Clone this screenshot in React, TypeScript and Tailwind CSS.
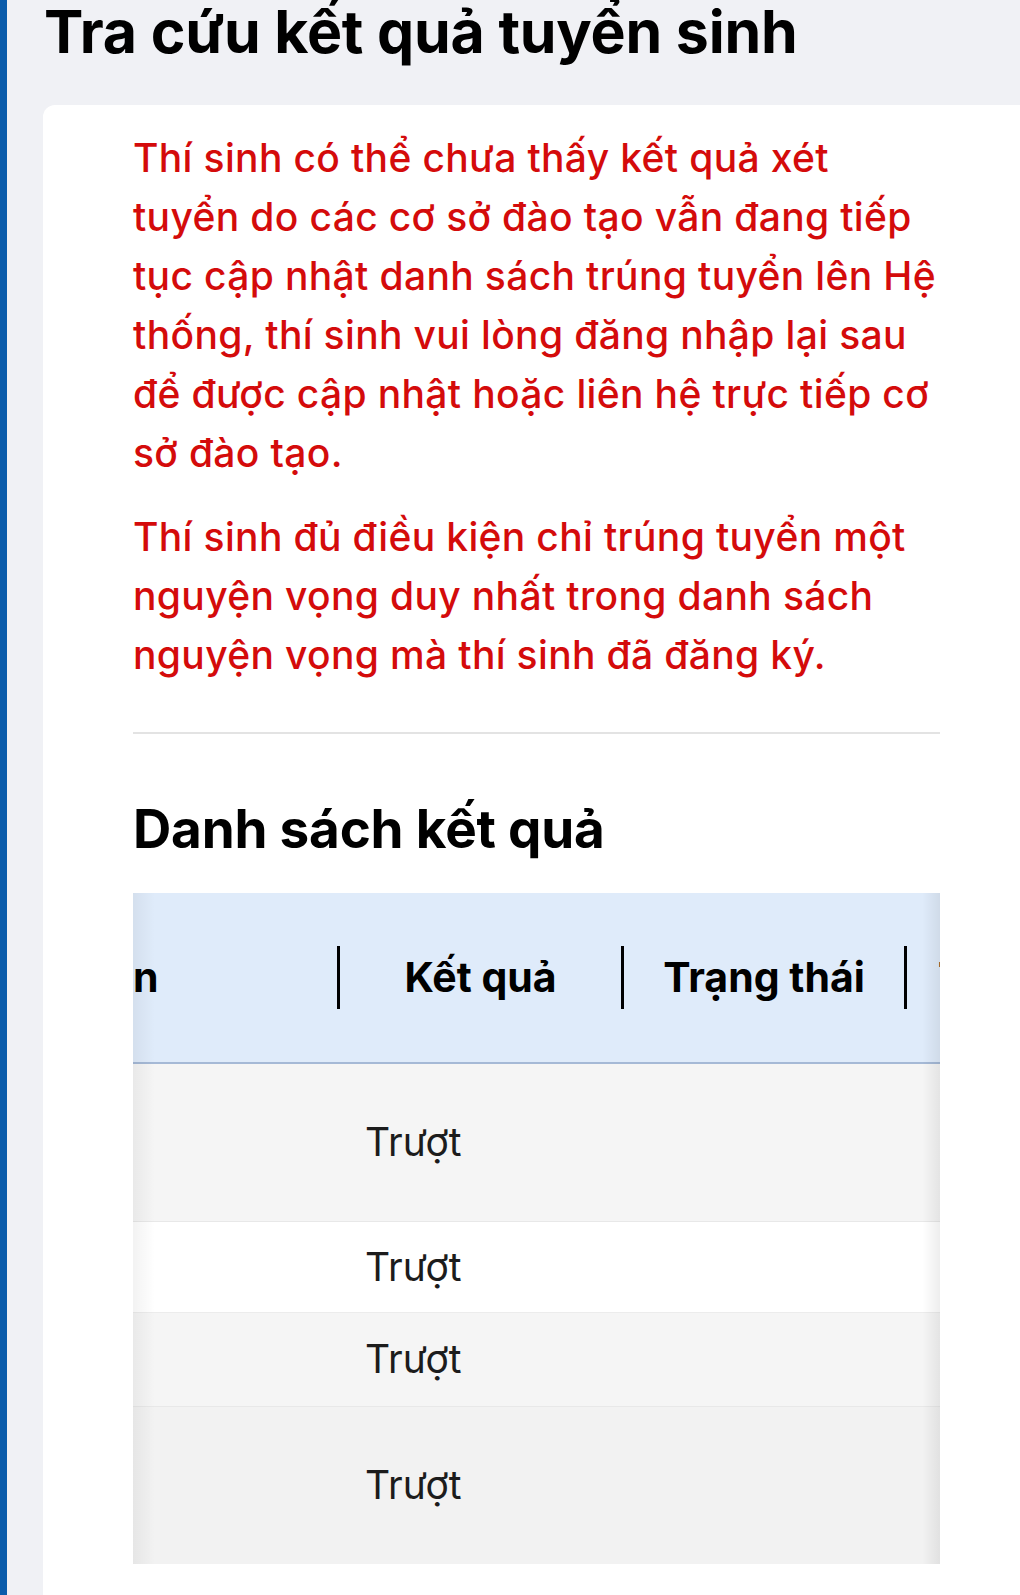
import React from "react";

const rows = [
  { h: "h-[158px]", bg: "bg-[#f5f5f5]", border: "border-b border-[#e8e8e8]" },
  { h: "h-[91px]", bg: "bg-white", border: "border-b border-[#ececec]" },
  { h: "h-[94px]", bg: "bg-[#f5f5f5]", border: "border-b border-[#e8e8e8]" },
  { h: "h-[157px]", bg: "bg-[#f2f2f2]", border: "" },
];

function Divider() {
  return <div className="w-[3px] h-[63px] bg-black shrink-0" />;
}

export default function App() {
  return (
    <div className="flex min-h-[1595px] bg-[#f0f1f5] font-[Inter,sans-serif] overflow-hidden">
      <div className="w-[7px] shrink-0 bg-[#0b5cab]" />
      <div className="flex-1 flex flex-col min-w-0">
        <h1 className="ml-[37px] -mt-[3px] text-[59px] leading-[70px] font-bold text-black tracking-[-0.2px]">
          Tra cứu kết quả tuyển sinh
        </h1>
        <div className="mt-[38px] ml-[36px] flex-1 bg-white rounded-tl-[12px] pl-[90px] pr-[80px] pt-[23px]">
          <p className="text-[39px] leading-[59px] font-medium tracking-[0.35px] text-[#d40b0b]">
            Thí sinh có thể chưa thấy kết quả xét tuyển do các cơ sở đào tạo vẫn đang tiếp tục cập nhật danh sách trúng tuyển lên Hệ thống, thí sinh vui lòng đăng nhập lại sau để được cập nhật hoặc liên hệ trực tiếp cơ sở đào tạo.
          </p>
          <p className="mt-[25px] text-[39px] leading-[59px] font-medium tracking-[0.35px] text-[#d40b0b]">
            Thí sinh đủ điều kiện chỉ trúng tuyển một nguyện vọng duy nhất trong danh sách nguyện vọng mà thí sinh đã đăng ký.
          </p>
          <div className="mt-[48px] h-[2px] bg-[#e3e3e3]" />
          <h2 className="mt-[63px] text-[53px] leading-[65px] font-bold tracking-[-0.2px] text-black">
            Danh sách kết quả
          </h2>
          <div className="relative mt-[31px] overflow-hidden">
            <div className="w-max">
              <div className="grid grid-cols-[207px_284px_283px_200px] h-[171px] bg-[#dfebfa] border-b-2 border-[#a5b9d6]">
                <div className="flex items-center justify-between">
                  <span className="text-[41px] font-bold text-black">n</span>
                  <Divider />
                </div>
                <div className="flex items-center">
                  <span className="flex-1 text-center text-[41px] font-bold text-black">Kết quả</span>
                  <Divider />
                </div>
                <div className="flex items-center">
                  <span className="flex-1 text-center text-[41px] font-bold text-black">Trạng thái</span>
                  <Divider />
                </div>
                <div className="flex items-center pl-[31px]">
                  <span className="text-[41px] font-bold text-black whitespace-nowrap">Thao tác</span>
                </div>
              </div>
              {rows.map((r, i) => (
                <div
                  key={i}
                  className={`grid grid-cols-[207px_284px_283px_200px] ${r.h} ${r.bg} ${r.border}`}
                >
                  <div />
                  <div className="flex items-center pl-[25px]">
                    <span className="text-[39px] text-[#1c1c1c]">Trượt</span>
                  </div>
                  <div />
                  <div />
                </div>
              ))}
            </div>
            <div className="pointer-events-none absolute inset-y-0 left-0 w-[22px] bg-linear-to-r from-black/[0.05] to-transparent" />
            <div className="pointer-events-none absolute inset-y-0 right-0 w-[18px] bg-linear-to-l from-black/[0.07] to-transparent" />
          </div>
        </div>
      </div>
    </div>
  );
}
